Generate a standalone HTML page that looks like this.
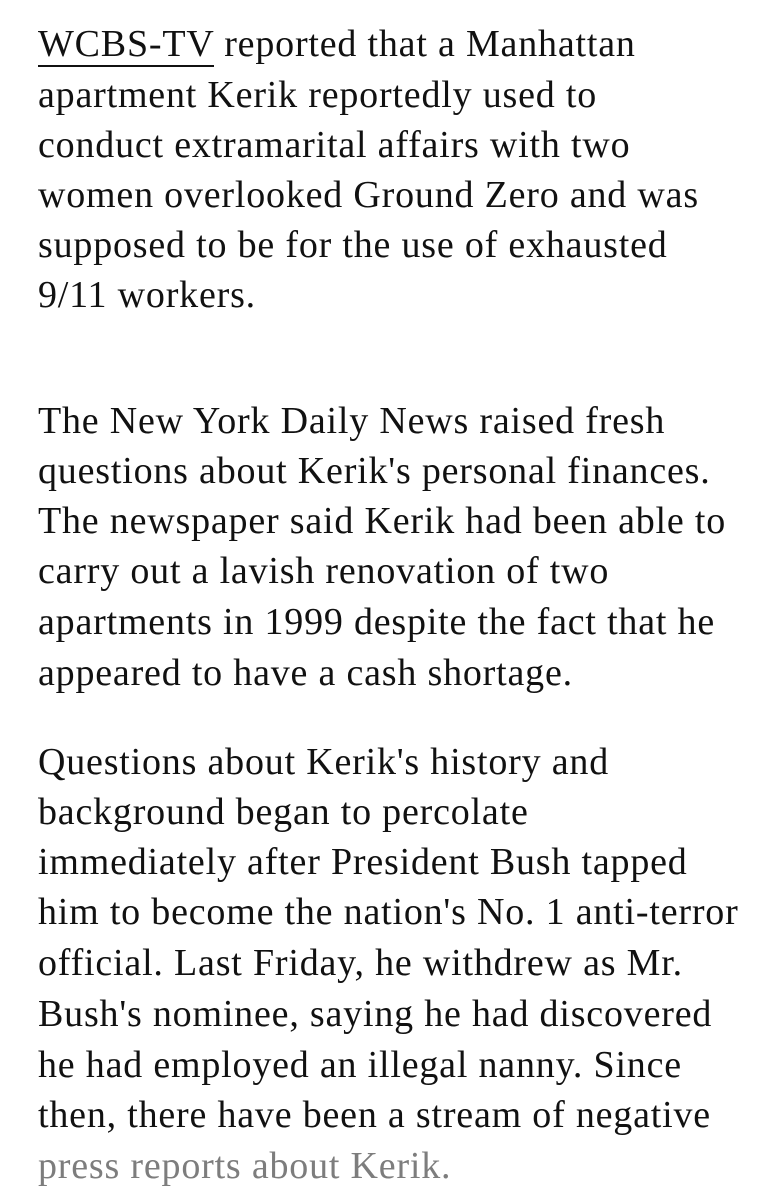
<!DOCTYPE html>
<html><head><meta charset="utf-8"><style>
body{margin:0;width:765px;height:1200px;background:#fff;overflow:hidden;position:relative}
.l{position:absolute;left:38px;font-family:"Liberation Serif",serif;font-size:38px;line-height:50px;color:#111;letter-spacing:0.8px;white-space:nowrap}
u{text-decoration:none;border-bottom:2px solid #111}
.g{color:#7d7d7d}
</style></head><body>
<div class="l" style="top:19px"><u>WCBS-TV</u> reported that a Manhattan</div>
<div class="l" style="top:70px">apartment Kerik reportedly used to</div>
<div class="l" style="top:120px">conduct extramarital affairs with two</div>
<div class="l" style="top:170px">women overlooked Ground Zero and was</div>
<div class="l" style="top:220px">supposed to be for the use of exhausted</div>
<div class="l" style="top:270px">9/11 workers.</div>
<div class="l" style="top:396px">The New York Daily News raised fresh</div>
<div class="l" style="top:446px">questions about Kerik's personal finances.</div>
<div class="l" style="top:496px">The newspaper said Kerik had been able to</div>
<div class="l" style="top:546px">carry out a lavish renovation of two</div>
<div class="l" style="top:597px">apartments in 1999 despite the fact that he</div>
<div class="l" style="top:648px">appeared to have a cash shortage.</div>
<div class="l" style="top:737px">Questions about Kerik's history and</div>
<div class="l" style="top:787px">background began to percolate</div>
<div class="l" style="top:837px">immediately after President Bush tapped</div>
<div class="l" style="top:887px">him to become the nation's No. 1 anti-terror</div>
<div class="l" style="top:938px">official. Last Friday, he withdrew as Mr.</div>
<div class="l" style="top:989px">Bush's nominee, saying he had discovered</div>
<div class="l" style="top:1040px">he had employed an illegal nanny. Since</div>
<div class="l" style="top:1090px">then, there have been a stream of negative</div>
<div class="l g" style="top:1141px">press reports about Kerik.</div>
</body></html>
